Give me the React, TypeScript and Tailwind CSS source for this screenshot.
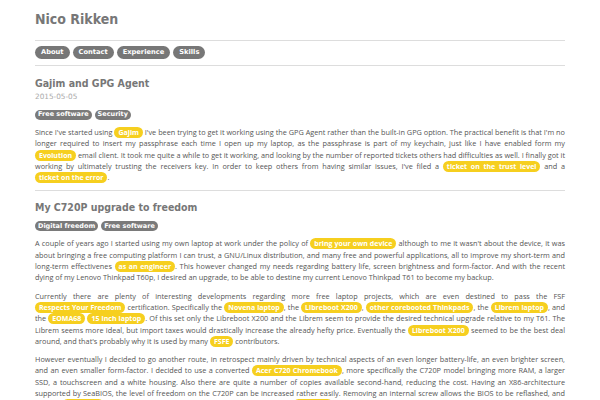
import React from "react";

const Hl = ({ children }: { children: React.ReactNode }) => (
  <span className="whitespace-nowrap rounded-full bg-[#f6cf1f] px-[4px] py-[1px] text-[7px] font-bold text-white">
    {children}
  </span>
);

const Tag = ({ children }: { children: React.ReactNode }) => (
  <span className="flex h-[10px] items-center rounded-full bg-[#7a7a7a] px-[3px] text-[6.5px] font-bold text-white">
    {children}
  </span>
);

const nav = ["About", "Contact", "Experience", "Skills"];

const heading = "font-['DejaVu_Sans_Condensed','DejaVu_Sans',sans-serif] font-bold text-[#777]";
const body =
  "text-justify font-['Open_Sans',sans-serif] text-[7.3px] leading-[11.3px] text-[#555]";

export default function App() {
  return (
    <div className="min-h-[400px] bg-white font-['DejaVu_Sans',sans-serif]">
      <div className="mx-auto w-[530px] pt-[10px]">
        <h1 className={`text-[14px] leading-[18px] ${heading}`}>{"Nico Rikken"}</h1>
        <div className="mt-[12px] border-t-[1.5px] border-[#ddd]" />
        <div className="mt-[5px] flex gap-[3px]">
          {nav.map((n) => (
            <span
              key={n}
              className="flex h-[13px] items-center rounded-full bg-[#777] px-[6px] text-[6.7px] font-bold text-white"
            >
              {n}
            </span>
          ))}
        </div>
        <div className="mt-[6px] border-t-[1.5px] border-[#ddd]" />

        <h2 className={`mt-[10px] text-[10.5px] leading-[14px] ${heading}`}>{"Gajim and GPG Agent"}</h2>
        <div className="mt-[2px] text-[7.3px] leading-[10px] text-[#aaa]">{"2015-05-05"}</div>
        <div className="mt-[8px] flex gap-[3px]">
          <Tag>{"Free software"}</Tag>
          <Tag>{"Security"}</Tag>
        </div>
        <p className={`mt-[7px] ${body}`}>
          {"Since I've started using "}<Hl>{"Gajim"}</Hl>{" I've been trying to get it working using the GPG Agent rather than the built-in GPG option. The practical benefit is that I'm no longer required to insert my passphrase each time I open up my laptop, as the passphrase is part of my keychain, just like I have enabled form my "}<Hl>{"Evolution"}</Hl>{" email client. It took me quite a while to get it working, and looking by the number of reported tickets others had difficulties as well. I finally got it working by ultimately trusting the receivers key. In order to keep others from having similar issues, I've filed a "}<Hl>{"ticket on the trust level"}</Hl>{" and a "}<Hl>{"ticket on the error"}</Hl>{"."}
        </p>
        <div className="mt-[7px] border-t-[1.5px] border-[#ddd]" />

        <h2 className={`mt-[9px] text-[10.5px] leading-[14px] ${heading}`}>{"My C720P upgrade to freedom"}</h2>
        <div className="mt-[7px] flex gap-[3px]">
          <Tag>{"Digital freedom"}</Tag>
          <Tag>{"Free software"}</Tag>
        </div>
        <div className={`mt-[7px] flex flex-col gap-[7px] ${body}`}>
          <p>
            {"A couple of years ago I started using my own laptop at work under the policy of "}<Hl>{"bring your own device"}</Hl>{" although to me it wasn't about the device, it was about bringing a free computing platform I can trust, a GNU/Linux distribution, and many free and powerful applications, all to improve my short-term and long-term effectivenes "}<Hl>{"as an engineer"}</Hl>{". This however changed my needs regarding battery life, screen brightness and form-factor. And with the recent dying of my Lenovo Thinkpad T60p, I desired an upgrade, to be able to destine my current Lenovo Thinkpad T61 to become my backup."}
          </p>
          <p>
            {"Currently there are plenty of interesting developments regarding more free laptop projects, which are even destined to pass the FSF "}<Hl>{"Respects Your Freedom"}</Hl>{" certification. Specifically the "}<Hl>{"Novena laptop"}</Hl>{", the "}<Hl>{"Libreboot X200"}</Hl>{", "}<Hl>{"other corebooted Thinkpads"}</Hl>{", the "}<Hl>{"Librem laptop"}</Hl>{", and the "}<Hl>{"EOMA68"}</Hl>{" "}<Hl>{"15 inch laptop"}</Hl>{". Of this set only the Libreboot X200 and the Librem seem to provide the desired technical upgrade relative to my T61. The Librem seems more ideal, but import taxes would drastically increase the already hefty price. Eventually the "}<Hl>{"Libreboot X200"}</Hl>{" seemed to be the best deal around, and that's probably why it is used by many "}<Hl>{"FSFE"}</Hl>{" contributors."}
          </p>
          <p>
            {"However eventually I decided to go another route, in retrospect mainly driven by technical aspects of an even longer battery-life, an even brighter screen, and an even smaller form-factor. I decided to use a converted "}<Hl>{"Acer C720 Chromebook"}</Hl>{", more specifically the C720P model bringing more RAM, a larger SSD, a touchscreen and a white housing. Also there are quite a number of copies available second-hand, reducing the cost. Having an X86-architecture supported by SeaBIOS, the level of freedom on the C720P can be increased rather easily. Removing an internal screw allows the BIOS to be reflashed, and the last "}<Hl>{"Libreboot"}</Hl>{" supports the use of SeaBIOS, so booting it this last one "}<Hl>{"coreboot"}</Hl>{" would give another step."}
          </p>
        </div>
      </div>
    </div>
  );
}
